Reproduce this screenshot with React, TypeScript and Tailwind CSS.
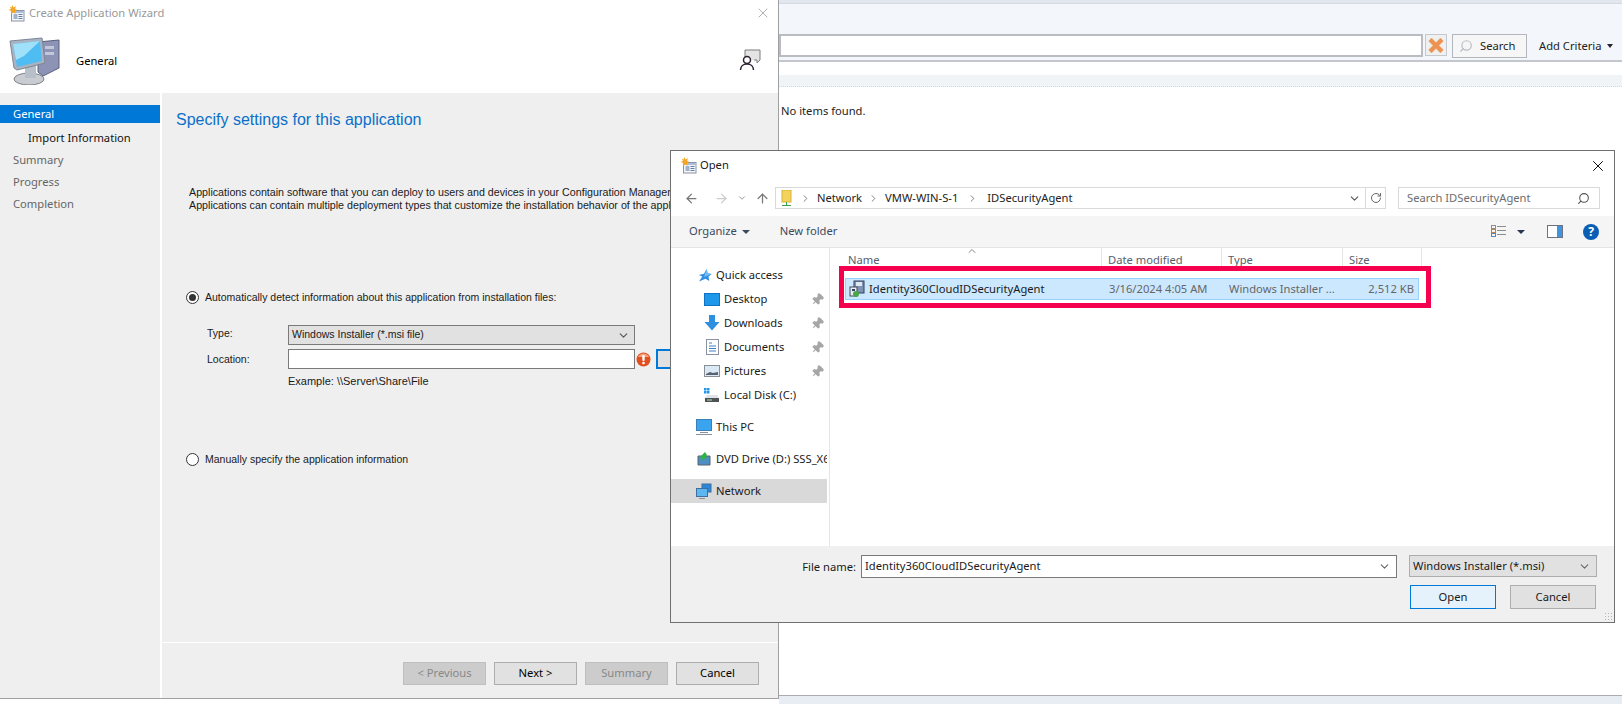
import React from 'react';
import { ArrowLeft, ArrowRight, ArrowUp, ChevronDown, ChevronRight, Pin, RotateCw, Search, X } from 'lucide-react';

const WindowIcon = () => (
  <svg width="17" height="17" viewBox="0 0 17 17" className="shrink-0">
    <rect x="3.500" y="5.500" width="12.500" height="10.500" fill="#f4f6fa" stroke="#8a93a3" />
    <rect x="4" y="6" width="11.500" height="2" fill="#a9bdd8" />
    <rect x="5.500" y="9" width="4" height="5" fill="#9fb3cc" />
    <rect x="10.500" y="9" width="4" height="1" fill="#5f7fa8" />
    <rect x="10.500" y="11" width="4" height="1" fill="#5f7fa8" />
    <rect x="10.500" y="13" width="4" height="1" fill="#5f7fa8" />
    <path d="M4.500 0l1.100 2.400L8 1.200 7.100 3.900l2.400 1.200-2.600.9.500 2.700-2.300-1.500-2.100 1.700.3-2.800L.500 5.100l2.500-1L1.800 1.500l2 1z" fill="#f5a623" />
  </svg>
);

const ComputerIcon = () => (
  <svg width="52" height="50" viewBox="0 0 52 50">
    <path d="M29 7l21-2v28l-16 8-5-4z" fill="#8d93b5" stroke="#5b607f" />
    <rect x="36" y="11" width="9" height="3" fill="#c3c7dc" />
    <rect x="36" y="17" width="9" height="3" fill="#c3c7dc" />
    <ellipse cx="20" cy="44" rx="15" ry="6" fill="#c9ccd0" stroke="#7d8186" />
    <rect x="16" y="30" width="11" height="13" fill="#b7bfc9" />
    <path d="M1 6l32-3 3 25-28 7-3-2z" fill="#a9b3c2" stroke="#7c8696" />
    <path d="M4 9l27-3 2 20-25 6z" fill="#4fbcf2" />
    <path d="M4 9l27-3-16 15-8 4z" fill="#9fe0fb" />
  </svg>
);

const ReviewIcon = () => (
  <svg width="24" height="24" viewBox="0 0 24 24" fill="none">
    <path d="M6 11V2h15v10l-3 3v-3h-3" stroke="#7d7d7d" fill="#e4e4e4" />
    <circle cx="8" cy="12" r="3.500" stroke="#2a2030" strokeWidth="1.500" fill="#fff" />
    <path d="M1.500 22c0-4 3-6 6.500-6s6.500 2 6.500 6" stroke="#2a2030" strokeWidth="1.500" fill="#fff" />
  </svg>
);

const InstallerIcon = () => (
  <svg width="16" height="18" viewBox="0 0 16 18">
    <rect x="5" y="1" width="10" height="12" fill="#7f93b2" stroke="#30405c" />
    <rect x="7" y="2" width="6" height="4" fill="#dfe7f2" />
    <rect x="1" y="7" width="7" height="9" fill="#e9edf2" stroke="#40485a" />
    <circle cx="7" cy="14" r="3" fill="#48a84a" />
    <rect x="3" y="9" width="3" height="2" fill="#30405c" />
  </svg>
);

const StarIcon = () => (
  <svg width="15" height="15" viewBox="0 0 15 15">
    <path d="M9.500 1l1.200 4.300L14.500 6l-3 2.700.8 4.300-3.800-2.300L2 13.500l3.300-5L1.800 7 7 5.800z" fill="#2f8ee5" />
    <path d="M9.500 1l1.200 4.300L14.500 6 7 9z" fill="#74bdf5" />
  </svg>
);

const DesktopIcon = () => (
  <svg width="16" height="13" viewBox="0 0 16 13"><rect x=".5" y=".5" width="15" height="12" fill="#1c97ea" stroke="#1173c2" /></svg>
);

const DownloadsIcon = () => (
  <svg width="16" height="16" viewBox="0 0 16 16"><path d="M5 0h6v7h4.500L8 15.500.5 7H5z" fill="#2e8fe0" /></svg>
);

const DocumentsIcon = () => (
  <svg width="13" height="16" viewBox="0 0 13 16">
    <rect x=".5" y=".5" width="12" height="15" fill="#fff" stroke="#8a93a3" />
    <path d="M3 4h3M3 7h7M3 9.500h7M3 12h7" stroke="#3d82c4" />
  </svg>
);

const PicturesIcon = () => (
  <svg width="16" height="12" viewBox="0 0 16 12">
    <rect x=".5" y=".5" width="15" height="11" fill="#dbe9f6" stroke="#8a8f96" />
    <path d="M2 9l4-2 3 1 5-1v3H2z" fill="#59626e" />
  </svg>
);

const DiskIcon = () => (
  <svg width="16" height="14" viewBox="0 0 16 14">
    <rect x="0" y="0" width="2.500" height="2.500" fill="#1c97ea" />
    <rect x="3" y="0" width="2.500" height="2.500" fill="#1c97ea" />
    <rect x="0" y="3" width="2.500" height="2.500" fill="#1c97ea" />
    <rect x="3" y="3" width="2.500" height="2.500" fill="#1c97ea" />
    <path d="M3 7h10l2 3H1z" fill="#dfe2e6" />
    <rect x="1" y="10" width="14" height="4" fill="#4e5257" />
    <rect x="3" y="11.500" width="5" height="1" fill="#a6e3a1" />
  </svg>
);

const PcIcon = () => (
  <svg width="16" height="16" viewBox="0 0 16 16">
    <rect x=".5" y=".5" width="15" height="11" fill="#3aa4ef" stroke="#3a7fb8" />
    <path d="M4 13.500h8M0 15.500h16" stroke="#8a9099" />
  </svg>
);

const DvdIcon = () => (
  <svg width="14" height="14" viewBox="0 0 14 14">
    <path d="M1 4h12v9H1z" fill="#4d8fc2" stroke="#5a6470" />
    <path d="M8 0L3 5l2.500 3 5-2.500-2-1L10 3z" fill="#2fb344" />
  </svg>
);

const NetworkIcon = () => (
  <svg width="16" height="16" viewBox="0 0 16 16">
    <rect x="6" y="1" width="9" height="8" fill="#2e86d8" stroke="#3c6f9e" />
    <rect x=".5" y="5.500" width="11" height="8" fill="#5cb7f0" stroke="#3c6f9e" />
    <path d="M3 15.500h6" stroke="#8a9099" />
  </svg>
);

const ViewIcon = () => (
  <svg width="16" height="13" viewBox="0 0 16 13" fill="none">
    <rect x=".5" y=".5" width="4" height="3" stroke="#8d8d8d" />
    <rect x=".5" y="4.500" width="4" height="3" stroke="#c9803a" />
    <rect x=".5" y="8.500" width="4" height="3" stroke="#5a88bd" />
    <path d="M6 1.500h9M6 5.500h9M6 9.500h9" stroke="#8d8d8d" />
  </svg>
);

const PaneIcon = () => (
  <svg width="16" height="13" viewBox="0 0 16 13">
    <rect x=".5" y=".5" width="15" height="12" fill="#fff" stroke="#6b7480" />
    <rect x="10" y="1" width="5" height="11" fill="#3f95e0" />
  </svg>
);

const ClearIcon = () => (
  <svg width="18" height="17" viewBox="0 0 18 17">
    <path d="M3 2.500l12 12M15 2.500l-12 12" stroke="#e8e2d2" strokeWidth="6" />
    <path d="M3 2.500l12 12M15 2.500l-12 12" stroke="#ee9254" strokeWidth="4" />
  </svg>
);

const ErrorIcon = () => (
  <svg width="15" height="15" viewBox="0 0 15 15">
    <circle cx="7.500" cy="7.500" r="7" fill="#e2501f" />
    <path d="M2 5a6 6 0 0 1 11 0z" fill="#f4a27c" />
    <rect x="6.300" y="3" width="2.400" height="6" rx="1" fill="#fff" />
    <circle cx="7.500" cy="11" r="1.300" fill="#fff" />
  </svg>
);

const Radio = ({ checked }: { checked?: boolean }) => (
  <span className="w-[13px] h-[13px] rounded-full border border-[#333333] bg-white flex items-center justify-center shrink-0">
    {checked && <span className="w-[7px] h-[7px] rounded-full bg-[#333333]" />}
  </span>
);

const wizardSteps = [
  { label: 'General', active: true, indent: 'pl-[13px]' },
  { label: 'Import Information', indent: 'pl-[28px] text-[#111111]' },
  { label: 'Summary', indent: 'pl-[13px] text-[#666666]' },
  { label: 'Progress', indent: 'pl-[13px] text-[#666666]' },
  { label: 'Completion', indent: 'pl-[13px] text-[#666666]' },
];

const wizardButtons = [
  { label: '< Previous', disabled: true },
  { label: 'Next >' },
  { label: 'Summary', disabled: true },
  { label: 'Cancel' },
];

const navItems = [
  { label: 'Quick access', icon: <StarIcon />, top: true },
  { label: 'Desktop', icon: <DesktopIcon />, pin: true },
  { label: 'Downloads', icon: <DownloadsIcon />, pin: true },
  { label: 'Documents', icon: <DocumentsIcon />, pin: true },
  { label: 'Pictures', icon: <PicturesIcon />, pin: true },
  { label: 'Local Disk (C:)', icon: <DiskIcon /> },
  { label: 'This PC', icon: <PcIcon />, top: true, gap: true },
  { label: 'DVD Drive (D:) SSS_X6', icon: <DvdIcon />, top: true, gap: true },
  { label: 'Network', icon: <NetworkIcon />, top: true, gap: true, selected: true },
];

const BackgroundApp = () => (
  <div className="w-full h-full pl-[779px] flex flex-col bg-white">
    <div className="h-[4px] bg-[#e2e6ee] border-b border-[#d5d9e2]" />
    <div className="h-[58px] bg-[#f3f6fb] border-b-2 border-[#c3c6cc] flex items-start pt-[30px]">
      <div className="flex-1 h-[23px] bg-white border-2 border-[#b9bcc1]" />
      <div className="ml-[2px] w-[22px] h-[22px] border border-[#c5c8cc] bg-[#f0f0f0] flex items-center justify-center">
        <ClearIcon />
      </div>
      <div className="ml-[5px] w-[75px] h-[24px] border border-[#b3b6ba] bg-[#f6f6f6] flex items-center pl-[6px] gap-[7px] text-[#222222]">
        <Search size={14} className="text-[#b8bcc0] -scale-x-100" />
        Search
      </div>
      <div className="ml-[12px] w-[83px] h-[24px] flex items-center text-[#222222]">
        Add Criteria
        <span className="ml-[5px] border-x-[3px] border-t-[4px] border-x-transparent border-t-[#2a2030]" />
      </div>
    </div>
    <div className="h-[13px]" />
    <div className="h-[12px] bg-[#f0f4f7] border-b border-dotted border-[#d5d8dc]" />
    <div className="flex-1 pt-[16px] pl-[2px] text-[#222222]">No items found.</div>
    <div className="h-[9px] bg-[#e8edf4] border-t border-[#a9acb1]" />
  </div>
);

const Wizard = () => (
  <div className="absolute left-0 top-0 w-[779px] h-[699px] bg-white border-r border-b border-[#a0a0a0] flex flex-col">
    <div className="h-[93px] shrink-0 flex flex-col">
      <div className="h-[26px] flex items-center pl-[8px] pr-[7px] gap-[4px] text-[#999999]">
        <WindowIcon />
        <span className="flex-1">Create Application Wizard</span>
        <X size={16} strokeWidth={1} className="text-[#888888]" />
      </div>
      <div className="flex-1 flex items-center pl-[9px] pr-[15px]">
        <ComputerIcon />
        <span className="ml-[15px] mt-[3px] flex-1 text-black">General</span>
        <ReviewIcon />
      </div>
    </div>
    <div className="flex-1 flex bg-[#efefef]">
      <div className="w-[160px] pt-[12px]">
        {wizardSteps.map((step) => (
          <div
            key={step.label}
            className={`flex items-center ${step.indent} ${step.active ? 'h-[18px] mb-[4px] bg-[#0078d7] text-white' : 'h-[22px]'}`}
          >
            {step.label}
          </div>
        ))}
      </div>
      <div className="flex-1 border-l-2 border-white flex flex-col font-['Liberation_Sans',sans-serif] text-[10.5px] text-[#1a1a1a]">
        <div className="flex-1 pl-[14px]">
          <h1 className="pt-[16px] text-[16px] leading-[22px] text-[#0a6fc9]">Specify settings for this application</h1>
          <div className="pl-[13px] pt-[55px] text-[10.7px] leading-[13px] whitespace-nowrap">
            <p>Applications contain software that you can deploy to users and devices in your Configuration Manager site.</p>
            <p>Applications can contain multiple deployment types that customize the installation behavior of the application.</p>
          </div>
          <div className="pl-[10px] pt-[78px] flex items-center gap-[6px] leading-[14px]">
            <Radio checked />
            <span>Automatically detect information about this application from installation files:</span>
          </div>
          <div className="pl-[31px] pt-[21px] flex items-center">
            <span className="w-[81px] -mt-[2px]">Type:</span>
            <div className="w-[347px] h-[20px] bg-[#e1e1e1] border border-[#7a7a7a] flex items-center justify-between px-[3px]">
              Windows Installer (*.msi file)
              <ChevronDown size={13} className="text-[#555555] mr-[1px]" />
            </div>
          </div>
          <div className="pl-[31px] pt-[4px] flex items-center">
            <span className="w-[81px] mt-[1px]">Location:</span>
            <div className="w-[347px] h-[20px] bg-white border border-[#7a7a7a]" />
            <span className="ml-[1px]"><ErrorIcon /></span>
            <div className="ml-[5px] w-[84px] h-[20px] bg-[#e1e1e1] border-2 border-[#0078d7]" />
          </div>
          <p className="pl-[112px] pt-[6px] text-[11px] leading-[13px]">Example: \\Server\Share\File</p>
          <div className="pl-[10px] pt-[64px] flex items-center gap-[6px] leading-[14px]">
            <Radio />
            <span>Manually specify the application information</span>
          </div>
        </div>
        <div className="h-[56px] border-t border-white flex items-start justify-end gap-[8px] pt-[19px] pr-[19px] font-['Noto_Sans',sans-serif] text-[11.2px]">
          {wizardButtons.map((button) => (
            <div
              key={button.label}
              className={`w-[83px] h-[23px] flex items-center justify-center border ${button.disabled ? 'bg-[#cccccc] border-[#bfbfbf] text-[#888888]' : 'bg-[#e1e1e1] border-[#adadad] text-black'}`}
            >
              {button.label}
            </div>
          ))}
        </div>
      </div>
    </div>
  </div>
);

const OpenDialog = () => (
  <div className="absolute left-[670px] top-[150px] w-[945px] h-[473px] bg-white border border-[#707070] flex flex-col text-[#1a1a1a]">
    <div className="h-[36px] shrink-0 flex items-center pb-[7px] pl-[9px] pr-[7px] gap-[3px]">
      <WindowIcon />
      <span className="flex-1">Open</span>
      <X size={18} strokeWidth={1.250} className="text-black" />
    </div>
    <div className="h-[29px] shrink-0 flex items-start pl-[13px] pr-[12px]">
      <ArrowLeft size={15} className="text-[#777777] mt-[4px]" />
      <ArrowRight size={15} className="ml-[15px] text-[#cccccc] mt-[4px]" />
      <ChevronDown size={10} className="ml-[8px] text-[#888888] mt-[6px]" />
      <ArrowUp size={15} className="ml-[8px] text-[#777777] mt-[4px]" />
      <div className="ml-[5px] w-[611px] h-[22px] border border-[#d9d9d9] flex items-center pl-[5px] text-[#222222]">
        <svg width="11" height="17" viewBox="0 0 11 17" className="shrink-0">
          <rect x="1" y="0" width="9" height="12" fill="#f3d35c" stroke="#d5b13a" />
          <path d="M5.500 12v3M1 15.500h9" stroke="#3aa24a" />
        </svg>
        <ChevronRight size={11} className="ml-[8px] text-[#777777]" />
        <span className="ml-[6px]">Network</span>
        <ChevronRight size={11} className="ml-[6px] text-[#777777]" />
        <span className="ml-[6px]">VMW-WIN-S-1</span>
        <ChevronRight size={11} className="ml-[9px] text-[#777777]" />
        <span className="ml-[9px] flex-1">IDSecurityAgent</span>
        <ChevronDown size={13} className="mr-[4px] text-[#555555]" />
        <div className="w-[20px] h-full border-l border-[#d9d9d9] flex items-center justify-center">
          <RotateCw size={12} className="text-[#666666]" />
        </div>
      </div>
      <div className="ml-[12px] w-[202px] h-[22px] border border-[#d9d9d9] flex items-center justify-between pl-[8px] pr-[9px] text-[#6d6d6d]">
        Search IDSecurityAgent
        <Search size={13} className="-scale-x-100 text-[#555555]" />
      </div>
    </div>
    <div className="h-[32px] shrink-0 bg-[#f5f5f5] border-b border-[#e5e5e5] flex items-center pl-[18px] pr-[15px] text-[#3b4a5e]">
      <span>Organize</span>
      <span className="ml-[5px] border-x-[4px] border-t-[4px] border-x-transparent border-t-[#3b4a5e]" />
      <span className="ml-[30px] flex-1">New folder</span>
      <ViewIcon />
      <span className="ml-[10px] border-x-[4px] border-t-[4px] border-x-transparent border-t-[#26364d]" />
      <span className="ml-[22px]"><PaneIcon /></span>
      <span className="ml-[20px] w-[16px] h-[16px] rounded-full bg-[#0a5fb4] text-white text-[12px] font-bold flex items-center justify-center">?</span>
    </div>
    <div className="flex-1 flex min-h-0">
      <div className="w-[159px] shrink-0 border-r border-[#e5e5e5] pt-[15px] pr-[2px]">
        {navItems.map((item) => (
          <div
            key={item.label}
            className={`h-[24px] flex items-center overflow-hidden whitespace-nowrap ${item.gap ? 'mt-[8px]' : ''} ${item.selected ? 'bg-[#d9d9d9]' : ''}`}
          >
            <span className={`w-[16px] flex justify-center shrink-0 ${item.top ? 'ml-[25px]' : 'ml-[33px]'}`}>{item.icon}</span>
            <span className="ml-[4px] flex-1">{item.label}</span>
            {item.pin && <Pin size={13} fill="#a6a6a6" className="mr-[3px] text-[#a6a6a6] rotate-45" />}
          </div>
        ))}
      </div>
      <div className="flex-1 relative">
        <div className="h-[22px] flex text-[#55606e]">
          <div className="w-[272px] border-r border-[#e5e5e5] pl-[18px] pt-[4px] relative">
            Name
            <ChevronDown size={12} className="absolute left-[136px] -top-[3px] text-[#888888] rotate-180" />
          </div>
          <div className="w-[120px] border-r border-[#e5e5e5] pl-[6px] pt-[4px]">Date modified</div>
          <div className="w-[121px] border-r border-[#e5e5e5] pl-[6px] pt-[4px]">Type</div>
          <div className="w-[79px] border-r border-[#e5e5e5] pl-[6px] pt-[4px]">Size</div>
        </div>
        <div className="ml-[15px] mt-[8px] w-[574px] h-[22px] bg-[#cce8ff] border border-[#99d1ff] flex items-center text-[#666666] whitespace-nowrap">
          <span className="ml-[3px] w-[17px]"><InstallerIcon /></span>
          <span className="ml-[3px] w-[240px] text-[#1a1a1a]">Identity360CloudIDSecurityAgent</span>
          <span className="w-[120px]">3/16/2024 4:05 AM</span>
          <span className="w-[118px]">Windows Installer ...</span>
          <span className="w-[67px] text-right">2,512 KB</span>
        </div>
        <div className="absolute left-[9px] top-[18px] w-[592px] h-[42px] border-[5px] border-[#f5004f]" />
      </div>
    </div>
    <div className="h-[76px] shrink-0 bg-[#f0f0f0] relative pr-[17px] flex flex-col items-end">
      <div className="pt-[9px] flex items-start">
        <span className="mr-[5px] leading-[23px]">File name:</span>
        <div className="w-[536px] h-[23px] bg-white border border-[#7a7a7a] flex items-center justify-between pl-[3px] pr-[5px]">
          Identity360CloudIDSecurityAgent
          <ChevronDown size={13} className="text-[#666666]" />
        </div>
        <div className="ml-[12px] w-[188px] h-[22px] bg-[#e1e1e1] border border-[#adadad] flex items-center justify-between pl-[3px] pr-[5px]">
          Windows Installer (*.msi)
          <ChevronDown size={13} className="text-[#666666]" />
        </div>
      </div>
      <div className="pt-[7px] mr-[1px] flex gap-[14px]">
        <div className="w-[86px] h-[24px] bg-[#e5f1fb] border border-[#0078d7] flex items-center justify-center">Open</div>
        <div className="w-[86px] h-[24px] bg-[#e1e1e1] border border-[#adadad] flex items-center justify-center">Cancel</div>
      </div>
      <div className="absolute right-[2px] bottom-[2px] w-[8px] h-[8px] bg-[radial-gradient(#b5b5b5_1px,transparent_1px)] bg-[length:3px_3px]" />
    </div>
  </div>
);

export default function App() {
  return (
    <div className="relative w-[1622px] h-[704px] overflow-hidden bg-[#e8edf4] font-['Noto_Sans',sans-serif] text-[11.2px]">
      <BackgroundApp />
      <Wizard />
      <OpenDialog />
    </div>
  );
}
